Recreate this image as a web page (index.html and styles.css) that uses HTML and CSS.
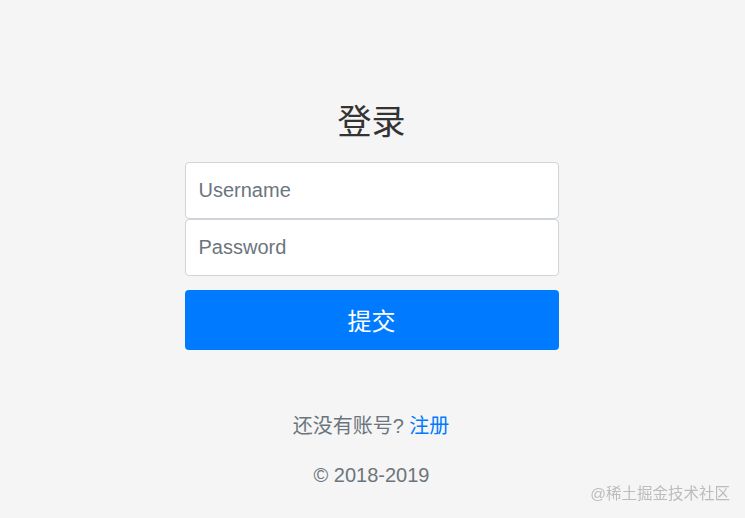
FILE: index.html
```html
<!DOCTYPE html>
<html lang="zh-CN">
<head>
  <meta charset="UTF-8">
  <title>登录</title>
  <link rel="stylesheet" href="styles.css">
</head>
<body>

  <div class="signin">
    <form class="form-signin">
      <h1 class="title">登录</h1>
      <input type="text" class="field field-top" placeholder="Username">
      <input type="password" class="field field-bottom" placeholder="Password">
      <button type="submit" class="btn-submit">提交</button>
    </form>

    <p class="register">还没有账号? <a href="#">注册</a></p>
    <p class="copyright">&copy; 2018-2019</p>
  </div>

  <div class="watermark">@稀土掘金技术社区</div>

</body>
</html>
```

FILE: styles.css
```css
html, body {
  height: 100%;
}

body {
  margin: 0;
  background-color: #f5f5f5;
  font-family: "Liberation Sans", Arial, "Noto Sans CJK SC", sans-serif;
  color: #333;
}

.signin {
  display: flex;
  flex-direction: column;
  align-items: center;
  padding-top: 103px;
}

.form-signin {
  width: 374px;
  margin-left: -2px;
  display: flex;
  flex-direction: column;
}

.title {
  margin: 0 0 20px;
  font-size: 34px;
  font-weight: 400;
  line-height: 39px;
  text-align: center;
  color: #333;
}

.field {
  height: 57px;
  padding: 0 13px;
  border: 1px solid #ced4da;
  border-radius: 4px;
  background: #fff;
  font-family: inherit;
  font-size: 20px;
  color: #495057;
  box-sizing: border-box;
  outline: none;
}

.field::placeholder {
  color: #6c757d;
}

.btn-submit {
  margin-top: 14px;
  height: 60px;
  padding-bottom: 2px;
  border: none;
  border-radius: 4px;
  background-color: #007bff;
  color: #fff;
  font-family: inherit;
  font-size: 24px;
  cursor: pointer;
}

.register, .copyright {
  margin: 0;
  font-size: 20px;
  line-height: 30px;
  color: #6c757d;
}

.register {
  margin-top: 61px;
  margin-left: -3px;
}

.register a {
  color: #007bff;
  text-decoration: none;
}

.copyright {
  margin-top: 19px;
  margin-left: -2px;
}

.watermark {
  position: fixed;
  right: 15px;
  bottom: 15px;
  font-size: 15.5px;
  color: #bcbcbc;
}
```
